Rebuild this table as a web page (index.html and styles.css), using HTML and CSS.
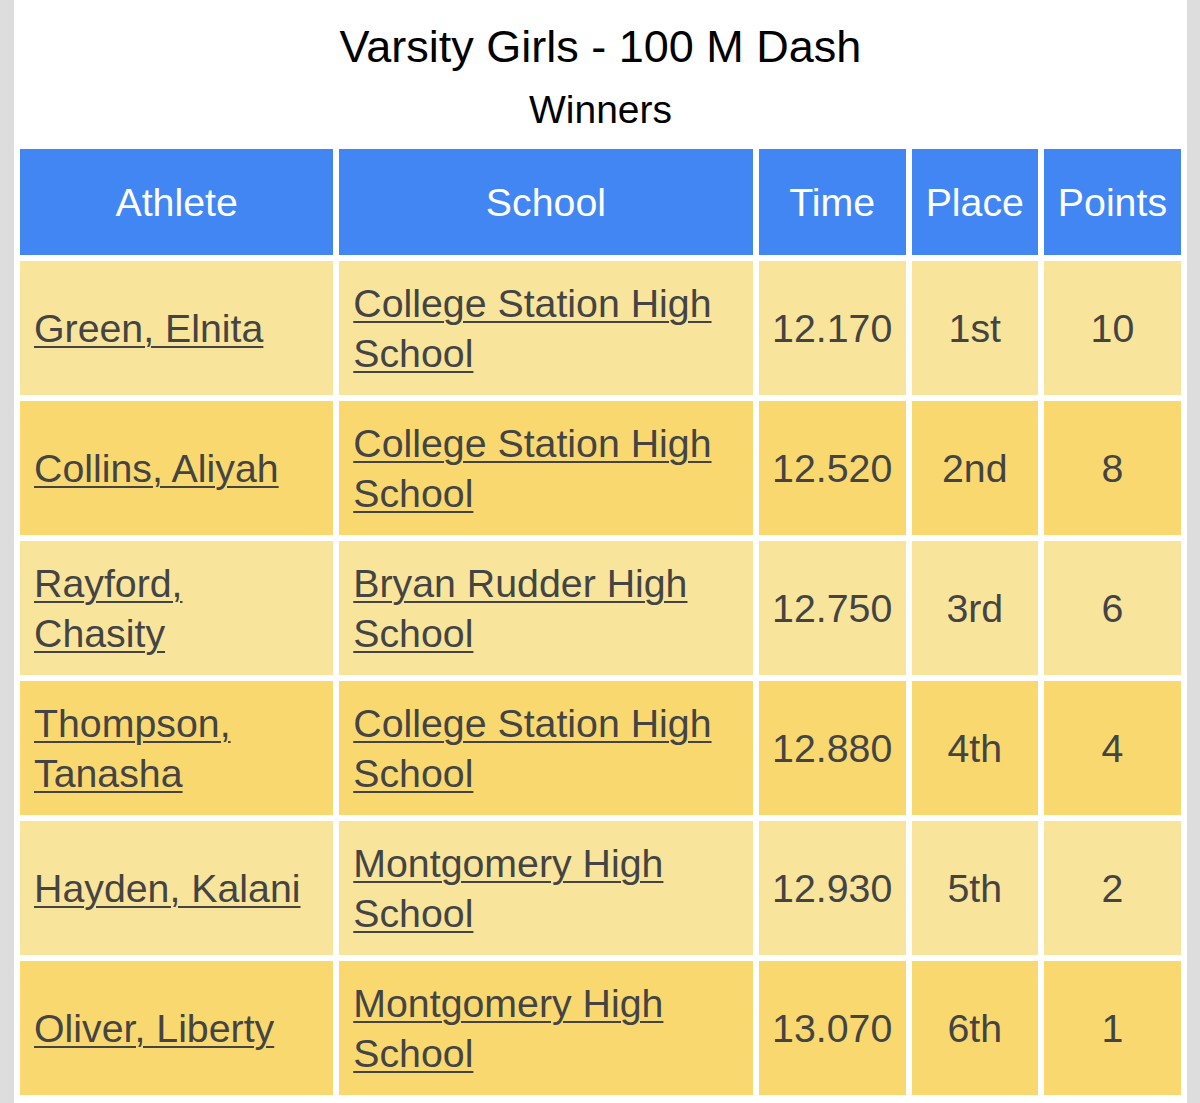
FILE: index.html
```html
<!DOCTYPE html>
<html lang="en">
<head>
<meta charset="utf-8">
<title>Varsity Girls - 100 M Dash</title>
<link rel="stylesheet" href="styles.css">
</head>
<body>
<div class="page">
  <h1 class="title">Varsity Girls - 100 M Dash</h1>
  <h2 class="subtitle">Winners</h2>
  <table class="results">
    <colgroup>
      <col class="c-athlete">
      <col class="c-school">
      <col class="c-time">
      <col class="c-place">
      <col class="c-points">
    </colgroup>
    <thead>
      <tr>
        <th>Athlete</th>
        <th>School</th>
        <th>Time</th>
        <th>Place</th>
        <th>Points</th>
      </tr>
    </thead>
    <tbody>
      <tr class="odd">
        <td class="name"><a href="#">Green, Elnita</a></td>
        <td class="name"><a href="#">College Station High School</a></td>
        <td>12.170</td>
        <td>1st</td>
        <td>10</td>
      </tr>
      <tr class="even">
        <td class="name"><a href="#">Collins, Aliyah</a></td>
        <td class="name"><a href="#">College Station High School</a></td>
        <td>12.520</td>
        <td>2nd</td>
        <td>8</td>
      </tr>
      <tr class="odd">
        <td class="name"><a href="#">Rayford, Chasity</a></td>
        <td class="name"><a href="#">Bryan Rudder High School</a></td>
        <td>12.750</td>
        <td>3rd</td>
        <td>6</td>
      </tr>
      <tr class="even">
        <td class="name"><a href="#">Thompson, Tanasha</a></td>
        <td class="name"><a href="#">College Station High School</a></td>
        <td>12.880</td>
        <td>4th</td>
        <td>4</td>
      </tr>
      <tr class="odd">
        <td class="name"><a href="#">Hayden, Kalani</a></td>
        <td class="name"><a href="#">Montgomery High School</a></td>
        <td>12.930</td>
        <td>5th</td>
        <td>2</td>
      </tr>
      <tr class="even">
        <td class="name"><a href="#">Oliver, Liberty</a></td>
        <td class="name"><a href="#">Montgomery High School</a></td>
        <td>13.070</td>
        <td>6th</td>
        <td>1</td>
      </tr>
    </tbody>
  </table>
</div>
</body>
</html>
```

FILE: styles.css
```css
html, body {
  margin: 0;
  padding: 0;
}

body {
  background: #dddddd;
  font-family: "Liberation Sans", Arial, Helvetica, sans-serif;
}

.page {
  margin-left: 14px;
  width: 1173px;
  min-height: 1103px;
  background: #ffffff;
  overflow: hidden;
}

.title {
  margin: 0;
  padding-top: 22px;
  font-size: 45px;
  line-height: 50px;
  font-weight: normal;
  color: #000;
  text-align: center;
}

.subtitle {
  margin: 16px 0 0;
  font-size: 39px;
  line-height: 44px;
  font-weight: normal;
  color: #000;
  text-align: center;
}

.results {
  margin-top: 11px;
  width: 1173px;
  table-layout: fixed;
  border-collapse: separate;
  border-spacing: 6px;
  font-size: 39.3px;
  line-height: 50px;
}

.c-athlete { width: 313px; }
.c-school { width: 413px; }
.c-time { width: 147px; }
.c-place { width: 126px; }
.c-points { width: 137px; }

.results th {
  height: 106px;
  padding: 0;
  background: #4286f4;
  color: #ffffff;
  font-weight: normal;
  text-align: center;
  vertical-align: middle;
  white-space: nowrap;
}

.results td {
  height: 134px;
  padding: 0;
  color: #444444;
  text-align: center;
  vertical-align: middle;
  box-sizing: border-box;
}

.results td.name {
  text-align: left;
  padding: 0 14px;
}

.results a {
  color: #444444;
  text-decoration: underline;
  text-decoration-thickness: 2px;
  text-underline-offset: 4px;
}

.odd td {
  background: #f9e49b;
}

.even td {
  background: #f9d96f;
}
```
